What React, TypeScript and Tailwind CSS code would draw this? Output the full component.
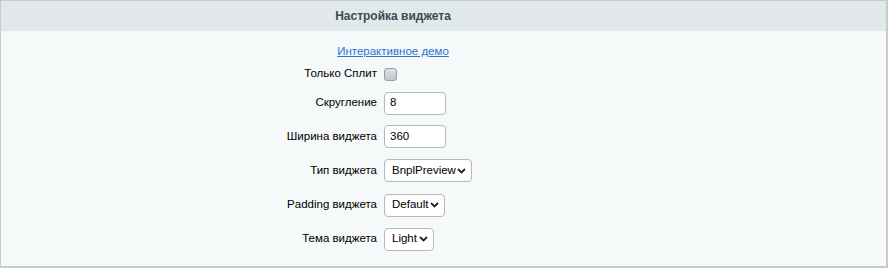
import React from "react";

const Chevron = () => (
  <svg width="9" height="6" viewBox="0 0 9 6" className="shrink-0">
    <path d="M1 1 L4.5 4.5 L8 1" fill="none" stroke="#222" strokeWidth="1.8" />
  </svg>
);

const Select = ({ value, width }: { value: string; width: string }) => (
  <div
    className={`flex h-[23px] ${width} items-center justify-between rounded-[4px] border border-[#b5b9bc] bg-white pl-[7px] pr-[5px] text-[11.5px] text-black`}
  >
    <span>{value}</span>
    <Chevron />
  </div>
);

const TextInput = ({ value }: { value: string }) => (
  <div className="flex h-[23px] w-[62px] items-center rounded-[4px] border border-[#b5b9bc] bg-white pl-[5px] text-[11.5px] text-black">
    {value}
  </div>
);

const Row = ({
  label,
  height,
  children,
}: {
  label: string;
  height: string;
  children: React.ReactNode;
}) => (
  <div className={`grid grid-cols-[376px_1fr] items-center gap-x-[7px] ${height}`}>
    <div className="text-right text-[11.5px] text-black">{label}</div>
    <div className="flex items-center">{children}</div>
  </div>
);

export default function App() {
  return (
    <div
      className="h-[268px] w-[888px] border-t border-l border-r-2 border-b-2 border-[#c8cbcd] bg-[#f5f9f9]"
      style={{ fontFamily: '"Liberation Sans", Arial, sans-serif' }}
    >
      <div className="flex h-[30px] bg-[#e0e8ea]">
        <div className="flex w-[784px] items-center justify-center text-[12px] font-bold text-[#3d4a52]">
          Настройка виджета
        </div>
      </div>
      <div className="w-[784px] pt-[10px]">
        <div className="flex h-[21px] items-center justify-center">
          <a href="#" className="text-[11.5px] text-[#2a72d5] underline">
            Интерактивное демо
          </a>
        </div>
        <Row label="Только Сплит" height="h-[24px]">
          <div className="h-[13px] w-[13px] rounded-[3px] border border-[#9a9ea1] bg-gradient-to-b from-[#dfe2e4] to-[#c3c7ca]" />
        </Row>
        <Row label="Скругление" height="h-[34px]">
          <TextInput value="8" />
        </Row>
        <Row label="Ширина виджета" height="h-[33px]">
          <TextInput value="360" />
        </Row>
        <Row label="Тип виджета" height="h-[35px]">
          <Select value="BnplPreview" width="w-[88px]" />
        </Row>
        <Row label="Padding виджета" height="h-[34px]">
          <Select value="Default" width="w-[61px]" />
        </Row>
        <Row label="Тема виджета" height="h-[34px]">
          <Select value="Light" width="w-[50px]" />
        </Row>
      </div>
    </div>
  );
}
